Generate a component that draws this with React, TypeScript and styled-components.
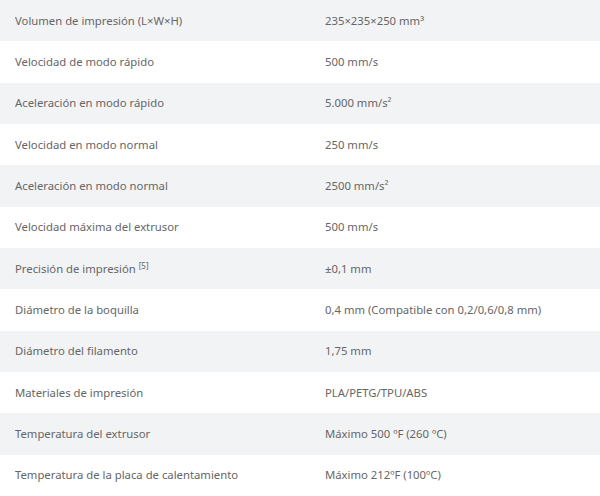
import styled, { createGlobalStyle } from 'styled-components';

const GlobalStyle = createGlobalStyle`
  html, body {
    margin: 0;
    padding: 0;
    background: #ffffff;
  }
`;

interface Spec {
  label: string;
  note?: string;
  value: string;
}

const SPECS: Spec[] = [
  { label: 'Volumen de impresión (L×W×H)', value: '235×235×250 mm³' },
  { label: 'Velocidad de modo rápido', value: '500 mm/s' },
  { label: 'Aceleración en modo rápido', value: '5.000 mm/s²' },
  { label: 'Velocidad en modo normal', value: '250 mm/s' },
  { label: 'Aceleración en modo normal', value: '2500 mm/s²' },
  { label: 'Velocidad máxima del extrusor', value: '500 mm/s' },
  { label: 'Precisión de impresión', note: '[5]', value: '±0,1 mm' },
  { label: 'Diámetro de la boquilla', value: '0,4 mm (Compatible con 0,2/0,6/0,8 mm)' },
  { label: 'Diámetro del filamento', value: '1,75 mm' },
  { label: 'Materiales de impresión', value: 'PLA/PETG/TPU/ABS' },
  { label: 'Temperatura del extrusor', value: 'Máximo 500 ºF (260 ºC)' },
  { label: 'Temperatura de la placa de calentamiento', value: 'Máximo 212ºF (100ºC)' },
];

export default function App(): JSX.Element {
  return (
    <>
      <GlobalStyle />
      <SpecTable>
        {SPECS.map((spec, i) => (
          <SpecRow key={spec.label} $shaded={i % 2 === 0}>
            <Label>
              {spec.label}
              {spec.note && <Note>{spec.note}</Note>}
            </Label>
            <Value>{spec.value}</Value>
          </SpecRow>
        ))}
      </SpecTable>
    </>
  );
}

const SpecTable = styled.div`
  width: 600px;
  display: flex;
  flex-direction: column;
  font-family: 'Noto Sans', 'DejaVu Sans', sans-serif;
  font-size: 11.3px;
  color: #666666;
`;

const SpecRow = styled.div<{ $shaded: boolean }>`
  height: 41.33px;
  display: grid;
  grid-template-columns: 300px 1fr;
  align-items: center;
  padding-bottom: 1px;
  box-sizing: border-box;
  background: ${({ $shaded }) => ($shaded ? '#f2f3f5' : '#ffffff')};
`;

const Label = styled.div`
  padding-left: 15px;
`;

const Note = styled.sup`
  font-size: 8px;
  margin-left: 3px;
  vertical-align: 4px;
`;

const Value = styled.div`
  padding-left: 25px;
`;
